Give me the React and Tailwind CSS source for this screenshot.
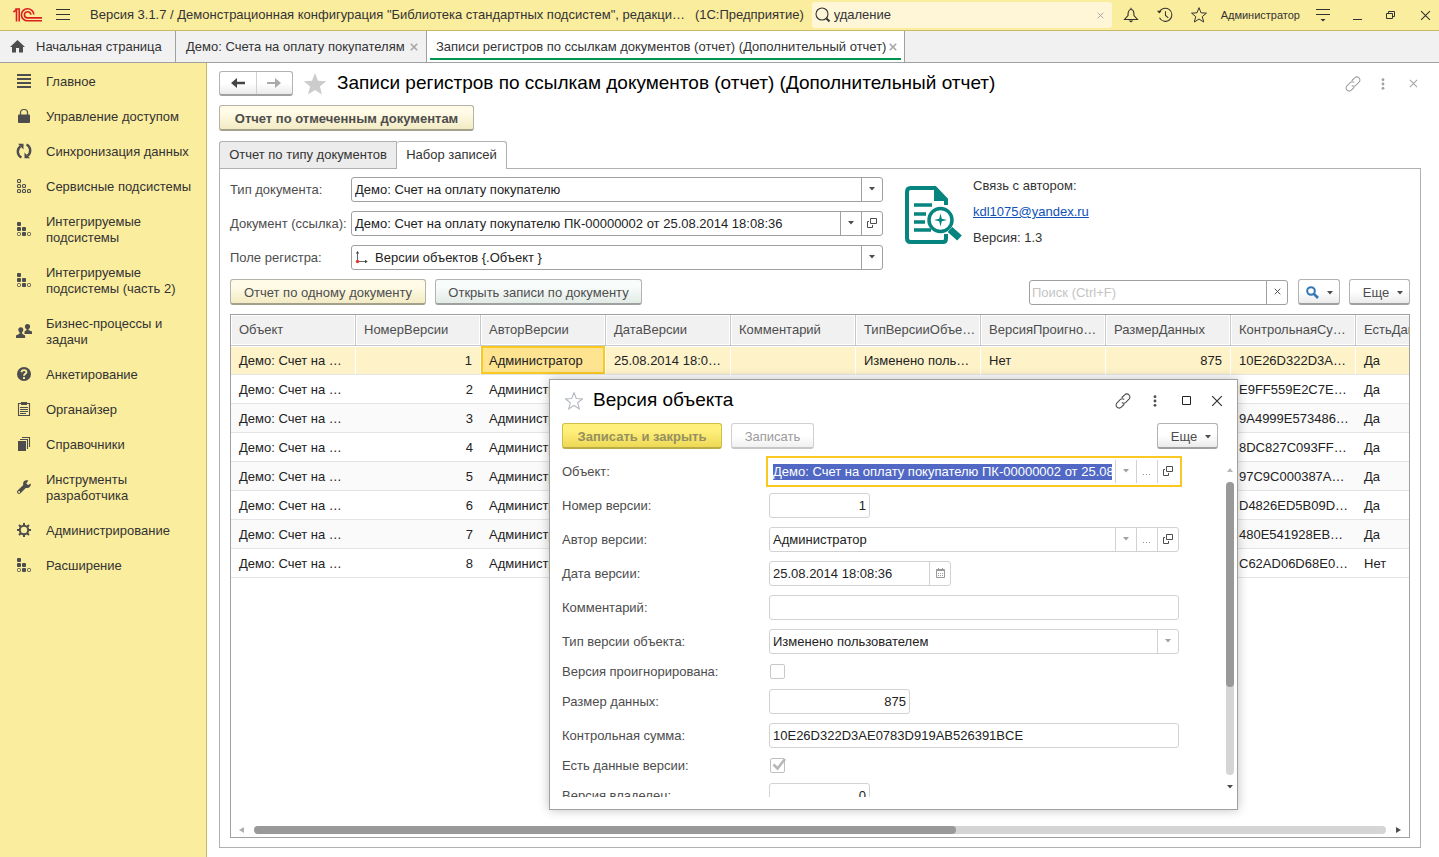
import clsx from "clsx";

const sections = [
  { label: "Главное", icon: "lines" },
  { label: "Управление доступом", icon: "lock" },
  { label: "Синхронизация данных", icon: "sync" },
  { label: "Сервисные подсистемы", icon: "dots" },
  { label: "Интегрируемые подсистемы", icon: "blocks" },
  { label: "Интегрируемые подсистемы (часть 2)", icon: "blocks" },
  { label: "Бизнес-процессы и задачи", icon: "people" },
  { label: "Анкетирование", icon: "question" },
  { label: "Органайзер", icon: "clipboard" },
  { label: "Справочники", icon: "books" },
  { label: "Инструменты разработчика", icon: "wrench" },
  { label: "Администрирование", icon: "gear" },
  { label: "Расширение", icon: "blocks" },
];

const columns = [
  "Объект",
  "НомерВерсии",
  "АвторВерсии",
  "ДатаВерсии",
  "Комментарий",
  "ТипВерсииОбъе…",
  "ВерсияПроигно…",
  "РазмерДанных",
  "КонтрольнаяСу…",
  "ЕстьДанные",
];

const hashes = [
  "10E26D322D3A…",
  "E9FF559E2C7E…",
  "9A4999E573486…",
  "8DC827C093FF…",
  "97C9C000387A…",
  "D4826ED5B09D…",
  "480E541928EB…",
  "C62AD06D68E0…",
];

const rows = hashes.map((hash, i) => ({
  object: "Демо: Счет на …",
  number: i + 1,
  author: "Администратор",
  date: i === 0 ? "25.08.2014 18:0…" : "",
  comment: "",
  type: i === 0 ? "Изменено поль…" : "",
  ignored: i === 0 ? "Нет" : "",
  size: i === 0 ? "875" : "",
  hash,
  hasData: i === 7 ? "Нет" : "Да",
}));

function Logo() {
  return (
    <svg width="30" height="16" viewBox="0 0 30 16" fill="none" stroke="#d9201f" strokeWidth="1.6">
      <path d="M.4 5 3.500 2.800V14.500M2.200 2H6.200V14.500" />
      <path d="M20.800 7.500A6.200 6 0 1 0 14.600 13.800H29" />
      <path d="M17.800 7.800A3.200 3.100 0 1 0 14.600 10.900H29" />
    </svg>
  );
}

function SectionIcon({ name }) {
  const box = { width: 16, height: 16, viewBox: "0 0 16 16", fill: "#4d4d4d", className: "-mt-0.5 shrink-0" };
  switch (name) {
    case "lines":
      return (
        <svg {...box}>
          <path d="M1 1h14v2H1zM1 5h14v2H1zM1 9h14v2H1zM1 13h14v2H1z" />
        </svg>
      );
    case "lock":
      return (
        <svg {...box}>
          <rect x="2" y="6.500" width="12" height="8.500" rx="1" />
          <path d="M4.500 7V4.500a3 3 0 0 1 3-3h1a3 3 0 0 1 3 3V7" fill="none" stroke="#4d4d4d" strokeWidth="1.2" />
        </svg>
      );
    case "sync":
      return (
        <svg {...box}>
          <path d="M5.500 14.500C1 12.500.5 6 4.500 3.200M10.500 1.500C15 3.500 15.500 10 11.500 12.800" fill="none" stroke="#4d4d4d" strokeWidth="2.4" />
          <path d="M2 .8h5.500v5.700zM14 15.200H8.500V9.500z" />
        </svg>
      );
    case "dots":
      return (
        <svg {...box} fill="none" stroke="#4d4d4d" strokeWidth="1.1">
          {[[1.5, 1.5], [1.5, 6.5], [6.5, 6.5], [1.5, 11.5], [6.5, 11.5], [11.5, 11.5]].map(([x, y]) => (
            <rect key={`${x}-${y}`} x={x} y={y} width="3" height="3" rx="1" />
          ))}
        </svg>
      );
    case "blocks":
      return (
        <svg {...box}>
          <rect x="1" y="1" width="4" height="4" rx="1" />
          <rect x="1" y="6" width="4" height="4" rx="1" />
          <rect x="6" y="6" width="4" height="4" rx="1" />
          <rect x="6" y="11" width="4" height="4" rx="1" />
          <rect x="1.500" y="11.500" width="3" height="3" rx="1" fill="none" stroke="#4d4d4d" />
          <rect x="11.500" y="11.500" width="3" height="3" rx="1" fill="none" stroke="#4d4d4d" />
        </svg>
      );
    case "people":
      return (
        <svg {...box}>
          <circle cx="11.500" cy="3.500" r="2.600" />
          <path d="M8.500 11V8.500L10.500 7V5h2v2l3.500 1.500V11z" />
          <circle cx="4.800" cy="6.800" r="2.500" />
          <path d="M0 15v-2.500l3.500-1.700V8h2.600v2.800l3 1.700V15z" />
        </svg>
      );
    case "question":
      return (
        <svg {...box}>
          <circle cx="8" cy="8" r="7" />
          <path d="M5.500 6.300C5.600 3.300 10.500 3.400 10.400 6.200 10.300 7.900 8 7.800 8 9.800M8 11v2" fill="none" stroke="#fbed9e" strokeWidth="1.900" />
        </svg>
      );
    case "clipboard":
      return (
        <svg {...box}>
          <path d="M2.500 2.500h11v12h-11z" fill="none" stroke="#4d4d4d" strokeWidth="1.1" />
          <path d="M5 1h6v3H5zM4 6h8v1H4zM4 8h8v1H4zM4 10h8v1H4zM4 12h6v1H4z" />
        </svg>
      );
    case "books":
      return (
        <svg {...box}>
          <path d="M2 5h8v10H2z" />
          <path d="M4 3.500h7.500V13M6 1.500h7.500V11" fill="none" stroke="#4d4d4d" strokeWidth="1.100" />
        </svg>
      );
    case "wrench":
      return (
        <svg {...box}>
          <path d="M14.800 4.500 12 6 10.300 4.400 12.300 1.500C8.500.5 6.500 3 7.300 6L1.600 11.400a2 2 0 0 0 0 2.900c.9.900 2 .8 2.900 0L9.800 8.900c3 .8 5.400-1.400 5-4.400zM3.100 14a1 1 0 1 1 0-2 1 1 0 0 1 0 2z" />
        </svg>
      );
    default:
      return (
        <svg {...box} fill="none" stroke="#4d4d4d">
          <circle cx="8" cy="8" r="4.200" strokeWidth="2" />
          <path
            d="M8 1v2.500M8 12.500V15M1 8h2.500M12.500 8H15M3 3l1.800 1.800M11.200 11.200 13 13M13 3l-1.800 1.800M4.800 11.200 3 13"
            strokeWidth="2"
          />
        </svg>
      );
  }
}

function Cross({ size = 8, className = "text-[#a6a6a6]", weight = 1.6 }) {
  return (
    <svg width={size} height={size} viewBox="0 0 10 10" stroke="currentColor" strokeWidth={weight} className={className}>
      <path d="M1 1l8 8M9 1 1 9" />
    </svg>
  );
}

function Caret({ className = "text-[#4d4d4d]" }) {
  return (
    <svg width="6" height="4" viewBox="0 0 6 4" fill="currentColor" className={className}>
      <path d="M0 0h6L3 3.500z" />
    </svg>
  );
}

function OpenIcon() {
  return (
    <svg width="10" height="10" viewBox="0 0 10 10" fill="none" stroke="#4d4d4d" strokeWidth="1">
      <path d="M3.500.5h6v5h-6zM2 3.500H.5v6h5V7" />
    </svg>
  );
}

function LinkIcon() {
  return (
    <svg width="16" height="16" viewBox="0 0 16 16" fill="none" stroke="currentColor" strokeWidth="1.100" strokeLinecap="round">
      <path d="M7 4.500 9.700 1.800a3 3 0 0 1 4.300 0 3 3 0 0 1 0 4.300L10.800 9.300a3 3 0 0 1-3.600.5" />
      <path d="M9 11.500 6.300 14.200a3 3 0 0 1-4.300 0 3 3 0 0 1 0-4.300L5.200 6.700a3 3 0 0 1 3.600-.5" />
    </svg>
  );
}

function DotsIcon() {
  return (
    <svg width="4" height="12" viewBox="0 0 4 12" fill="currentColor">
      <circle cx="2" cy="1.700" r="1.400" />
      <circle cx="2" cy="6" r="1.400" />
      <circle cx="2" cy="10.300" r="1.400" />
    </svg>
  );
}

function StarIcon({ size, ...props }) {
  return (
    <svg width={size} height={size} viewBox="0 0 24 24" {...props}>
      <path d="M12 1l3 7.700 8.200.5-6.300 5.200 2.100 8.100L12 18l-7 4.500 2.100-8.100L.8 9.200 9 8.700z" />
    </svg>
  );
}

const IconButton = ({ label, className, children }) => (
  <button aria-label={label} className={clsx("flex items-center justify-center", className)}>
    {children}
  </button>
);

function Button({ tone = "plain", className, children }) {
  return (
    <button
      className={clsx(
        "flex h-[26px] items-center justify-center rounded-[3px] border border-b-2 pt-0.5 whitespace-nowrap",
        tone === "plain" && "border-[#b3b3b3] border-b-[#a0a0a0] bg-linear-to-b from-white from-50% to-[#ebebeb] text-[#4d4d4d]",
        tone === "cream" && "border-[#b3b3a8] border-b-[#a3a08c] bg-linear-to-b from-[#fffbe6] from-30% to-[#f3ebc4] text-[#4d4d4d]",
        tone === "mint" && "border-[#b3b3b3] border-b-[#a0a0a0] bg-linear-to-b from-[#f8fcfa] from-30% to-[#e2ebe6] text-[#4d4d4d]",
        tone === "yellow" && "border-[#d0bf45] border-b-[#bcac45] bg-linear-to-b from-[#ffef7b] from-30% to-[#eed955] font-bold text-[#96905f]",
        tone === "disabled" && "border-[#d0d0d0] border-b-[#c6c6c6] bg-linear-to-b from-white from-50% to-[#f0f0f0] text-[#9a9a9a]",
        className
      )}
    >
      {children}
    </button>
  );
}

function TitleBar() {
  return (
    <header className="flex h-[31px] shrink-0 items-center border-b border-[#c9b866] bg-[#fbed9e] text-[#333]">
      <span className="ml-[13px] w-[30px]">
        <Logo />
      </span>
      <IconButton label="Меню" className="ml-[13px]">
        <svg width="14" height="12" viewBox="0 0 14 12" stroke="#333">
          <path d="M0 .5h14M0 5.500h14M0 10.500h14" />
        </svg>
      </IconButton>
      <span className="ml-5 min-w-0 truncate">
        Версия 3.1.7 / Демонстрационная конфигурация "Библиотека стандартных подсистем", редакци…
      </span>
      <span className="ml-2.5 whitespace-nowrap">(1С:Предприятие)</span>
      <div className="ml-auto flex h-[26px] w-[300px] shrink-0 items-center rounded-[3px] bg-[#fef6d6] pr-2 pl-[3px]">
        <svg width="16" height="16" viewBox="0 0 16 16" fill="none" stroke="#333" className="shrink-0">
          <circle cx="7" cy="7" r="6" strokeWidth="1.100" />
          <path d="m11.500 11.500 3 3" strokeWidth="2" />
        </svg>
        <input aria-label="Поиск" defaultValue="удаление" className="ml-[3px] min-w-0 flex-1 outline-none" />
        <IconButton label="Очистить">
          <Cross size={7} weight={1.4} />
        </IconButton>
      </div>
      <IconButton label="Уведомления" className="ml-[11px] w-4">
        <svg width="16" height="16" viewBox="0 0 16 16" fill="none" stroke="#333" strokeWidth="1.100">
          <path d="M1.500 12.500h13L11 8.500C11 5 10.500 2.500 8 2.500S5 5 5 8.500zM8 .8v1.700" />
          <path d="M5.500 13.500h5L8 15.500z" fill="#333" stroke="none" />
        </svg>
      </IconButton>
      <IconButton label="История" className="ml-[18px] w-4">
        <svg width="17" height="16" viewBox="0 0 17 16" fill="none" stroke="#333" strokeWidth="1.100">
          <path d="M2.300 5.200A7 7 0 1 1 2.600 11M9 4v4.500l3 2.500" />
          <path d="M0 3.500h5L2.500 6.500z" fill="#333" stroke="none" />
        </svg>
      </IconButton>
      <IconButton label="Избранное" className="ml-[18px] w-4">
        <StarIcon size={16} fill="none" stroke="#333" strokeWidth="1.500" />
      </IconButton>
      <button className="ml-3.5 text-[11px]">Администратор</button>
      <IconButton label="Сервис" className="ml-[15px] w-4">
        <svg width="14" height="13" viewBox="0 0 14 13" fill="#333">
          <path d="M0 0h14v1H0zM0 5h14v1H0zM4.500 10h5L7 12.500z" />
        </svg>
      </IconButton>
      <IconButton label="Свернуть" className="ml-[18px] h-4 w-4">
        <svg width="9" height="9" viewBox="0 0 9 9" fill="#333">
          <path d="M0 8h9v1H0z" />
        </svg>
      </IconButton>
      <IconButton label="Восстановить" className="ml-[18px] w-4">
        <svg width="10" height="10" viewBox="0 0 10 10" fill="none" stroke="#333">
          <path d="M.5 3.500h6v5h-6zM2.500 3.500v-2h6v5h-2" />
        </svg>
      </IconButton>
      <IconButton label="Закрыть" className="mr-1.5 ml-[18px] w-4">
        <Cross size={11} weight={1} className="text-[#333]" />
      </IconButton>
    </header>
  );
}

function WindowTabs() {
  return (
    <nav className="flex h-8 shrink-0 border-b border-[#a0a0a0] bg-[#f1f1f1] text-[#333]">
      <button className="flex w-44 items-center border-r border-[#a0a0a0] pl-2.5 text-left whitespace-nowrap">
        <svg width="15" height="14" viewBox="0 0 15 14" fill="#4d4d4d" className="mr-[11px]">
          <path d="M7.500 0 15 7h-2v5.500H9V8H6v4.500H2V7H0z" />
        </svg>
        Начальная страница
      </button>
      <div className="flex w-[251px] items-center justify-between border-r border-[#a0a0a0] pr-2 pl-2.5">
        <button className="whitespace-nowrap">Демо: Счета на оплату покупателям</button>
        <IconButton label="Закрыть вкладку">
          <Cross weight={2} />
        </IconButton>
      </div>
      <div className="flex w-[478px] border-r border-[#a0a0a0] bg-white px-[3px]">
        <div className="mb-0.5 flex w-full items-center justify-between border-b-2 border-[#00964b] pt-1 pr-1 pl-1.5">
          <button className="whitespace-nowrap">Записи регистров по ссылкам документов (отчет) (Дополнительный отчет)</button>
          <IconButton label="Закрыть вкладку">
            <Cross weight={2} />
          </IconButton>
        </div>
      </div>
    </nav>
  );
}

function Sidebar() {
  return (
    <aside className="w-[207px] shrink-0 border-r border-[#c9b866] bg-[#fbed9e] pt-px text-[#333]">
      {sections.map((s) => (
        <button key={s.label} className="flex w-full items-center gap-3.5 pt-2.5 pr-3 pb-[9px] pl-4 text-left leading-4">
          <SectionIcon name={s.icon} />
          {s.label}
        </button>
      ))}
    </aside>
  );
}

// Bordered box shared by all fields; trailing buttons are passed as children
function FieldBox({ dark, focused, className, children }) {
  return (
    <div
      className={clsx(
        "flex h-[25px] border bg-white text-[#222]",
        focused ? "border-transparent outline-2 outline-offset-1 outline-[#f9c922]" : "rounded-[3px]",
        !focused && (dark ? "border-[#a0a0a0]" : "border-[#d2d2d2]"),
        className
      )}
    >
      {children}
    </div>
  );
}

function FieldButton({ label, dark, children }) {
  return (
    <button
      aria-label={label}
      className={clsx(
        "flex w-[21px] shrink-0 items-center justify-center border-l pb-0.5",
        dark ? "border-[#a0a0a0]" : "border-[#d2d2d2]"
      )}
    >
      {children}
    </button>
  );
}

function EllipsisIcon() {
  return (
    <svg width="8" height="10" viewBox="0 0 8 10" fill="#999">
      <path d="M0 8h1v1H0zM3 8h1v1H3zM6 8h1v1H6z" />
    </svg>
  );
}

function SelectBox({ id, value, dark, icon }) {
  return (
    <FieldBox dark={dark} className="relative">
      {icon}
      <select id={id} className="min-w-0 flex-1 appearance-none pr-6 pl-[3px] outline-none">
        <option>{value}</option>
      </select>
      <span
        className={clsx(
          "pointer-events-none absolute inset-y-0 right-0 flex w-[21px] items-center justify-center border-l pb-0.5",
          dark ? "border-[#a0a0a0]" : "border-[#d2d2d2]"
        )}
      >
        <Caret className={dark ? "text-[#4d4d4d]" : "text-[#a0a0a0]"} />
      </span>
    </FieldBox>
  );
}

function ReportForm() {
  return (
    <div className="flex">
      <div className="grid grid-cols-[121px_532px] items-center gap-y-[9px] text-[#4d4d4d]">
        <label htmlFor="docType">Тип документа:</label>
        <SelectBox id="docType" dark value="Демо: Счет на оплату покупателю" />
        <label htmlFor="docRef" className="whitespace-nowrap">Документ (ссылка):</label>
        <FieldBox dark>
          <input
            id="docRef"
            defaultValue="Демо: Счет на оплату покупателю ПК-00000002 от 25.08.2014 18:08:36"
            className="min-w-0 flex-1 pl-[3px] outline-none"
          />
          <FieldButton label="Выбрать" dark>
            <Caret />
          </FieldButton>
          <FieldButton label="Открыть" dark>
            <OpenIcon />
          </FieldButton>
        </FieldBox>
        <label htmlFor="registerField">Поле регистра:</label>
        <SelectBox
          id="registerField"
          dark
          value="Версии объектов {.Объект }"
          icon={
            <svg width="14" height="14" viewBox="0 0 14 14" className="mt-1 mr-[3px] ml-[3px] shrink-0">
              <path d="M2.500 11V3M2.500 11.500H11" stroke="#666" fill="none" />
              <path d="M.8 3.500h3.400L2.500 1zM10 9.800v3.400l2.800-1.700z" fill="#444" />
              <circle cx="2.500" cy="11.500" r="1.700" fill="#e8382c" />
            </svg>
          }
        />
      </div>
      <svg width="60" height="60" viewBox="0 0 60 60" fill="none" stroke="#06847f" strokeWidth="4" className="mt-2 ml-5 shrink-0">
        <path d="M43 49v4.500Q43 57 40 57H7.500Q4 57 4 53V7Q4 3 7.500 3H32L43 14.500V20" />
        <path d="M32 3v12h11z" fill="#06847f" strokeWidth="2" />
        <path d="M11 20h18M11 29h12M11 37h11M11 45h17" strokeWidth="3.500" />
        <circle cx="37.500" cy="35" r="11.500" fill="#fff" strokeWidth="3.500" />
        <path d="m47 44.500 9.500 8.500" strokeWidth="7" />
        <path d="M37.500 28.500l1.300 5.200 5.200 1.300-5.200 1.300-1.300 5.200-1.300-5.200L31 35l5.200-1.300z" fill="#06847f" stroke="none" />
      </svg>
      <div className="ml-2.5 flex flex-col items-start gap-2.5 pt-px text-[#333]">
        <span className="leading-4">Связь с автором:</span>
        <a href="mailto:kdl1075@yandex.ru" className="leading-4 text-[#0f52b8] underline">
          kdl1075@yandex.ru
        </a>
        <span className="leading-4">Версия: 1.3</span>
      </div>
    </div>
  );
}

function RecordsTable() {
  return (
    <div className="mt-[9px] flex min-h-0 flex-1 flex-col overflow-hidden border border-[#a0a0a0]">
      <div className="min-h-0 flex-1 overflow-hidden">
        <table className="w-[1250px] table-fixed border-separate border-spacing-0">
          <thead>
            <tr className="h-[31px]">
              {columns.map((c) => (
                <th
                  key={c}
                  className="overflow-hidden border-r border-b border-[#c8c8c8] bg-[#f1f1f1] px-2 text-left font-normal whitespace-nowrap text-[#4d4d4d] shadow-[inset_0_0_0_1px_#fff]"
                >
                  {c}
                </th>
              ))}
            </tr>
          </thead>
          <tbody>
            {rows.map((row, r) => (
              <tr key={row.number} className={clsx("h-[29px]", r === 0 ? "bg-[#fdf2c8]" : r % 2 === 0 && "bg-[#fafafa]")}>
                {Object.entries(row).map(([key, value]) => (
                  <td
                    key={key}
                    className={clsx(
                      "overflow-hidden border-b border-b-[#e4e4e4] px-2 pt-0.5 whitespace-nowrap text-[#222]",
                      r === 0 && "border-r border-r-white",
                      (key === "number" || key === "size") && "text-right",
                      r === 0 && key === "author"
                        ? "bg-[#fee391] shadow-[inset_0_0_0_2px_#f9c922]"
                        : r === 0 && "shadow-[inset_0_1px_0_#fff]"
                    )}
                  >
                    {value}
                  </td>
                ))}
              </tr>
            ))}
          </tbody>
        </table>
      </div>
      <div className="flex h-4 shrink-0 items-center gap-2.5 px-2 pt-0.5">
        <svg width="5" height="6" viewBox="0 0 5 6" fill="#b0b0b0">
          <path d="M5 0v6L0 3z" />
        </svg>
        <div className="h-2 flex-1 rounded-full bg-[#d5d5d5]">
          <div className="h-2 w-[62%] rounded-full bg-[#999]" />
        </div>
        <svg width="5" height="6" viewBox="0 0 5 6" fill="#4d4d4d">
          <path d="M0 0v6l5-3z" />
        </svg>
      </div>
    </div>
  );
}

function VersionDialog() {
  return (
    <section
      role="dialog"
      aria-label="Версия объекта"
      className="absolute top-[379px] left-[549px] flex h-[431px] w-[689px] flex-col border border-[#a0a0a0] bg-white pb-3 shadow-[0_0_10px_rgba(0,0,0,0.25)]"
    >
      <div className="flex h-[43px] shrink-0 items-center pr-3 pb-0.5 pl-[15px] text-[#4d4d4d]">
        <IconButton label="В избранное">
          <StarIcon size={18} fill="none" stroke="#b4bac0" strokeWidth="1.500" />
        </IconButton>
        <h2 className="ml-2.5 text-[19px] text-black">Версия объекта</h2>
        <IconButton label="Ссылка" className="ml-auto w-4">
          <LinkIcon />
        </IconButton>
        <IconButton label="Действия" className="ml-4 w-4">
          <DotsIcon />
        </IconButton>
        <IconButton label="Развернуть" className="ml-[15px] w-4">
          <svg width="9" height="9" viewBox="0 0 9 9" fill="none" stroke="#222">
            <path d="M.5.5h8v8h-8z" />
          </svg>
        </IconButton>
        <IconButton label="Закрыть" className="ml-[15px] w-4">
          <Cross size={12} weight={1} className="text-[#333]" />
        </IconButton>
      </div>
      <div className="flex shrink-0 gap-[9px] pr-[19px] pl-3">
        <Button tone="yellow" className="w-40">Записать и закрыть</Button>
        <Button tone="disabled" className="w-[83px]">Записать</Button>
        <Button className="ml-auto w-[61px] gap-2 pl-[7px]">
          Еще <Caret />
        </Button>
      </div>
      <div className="flex min-h-0 flex-1 overflow-hidden">
        <div className="grid flex-1 grid-cols-[207px_410px] content-start items-center gap-y-[9px] overflow-hidden pt-[10px] pl-3 text-[#4d4d4d]">
          <label htmlFor="object">Объект:</label>
          <FieldBox focused>
            <input
              id="object"
              defaultValue="Демо: Счет на оплату покупателю ПК-00000002 от 25.08.2014 18:08:36"
              className="mx-[3px] h-4 min-w-0 flex-1 self-center bg-[#5169c4] text-white outline-none"
            />
            <FieldButton label="Выбрать из списка">
              <Caret className="text-[#a0a0a0]" />
            </FieldButton>
            <FieldButton label="Выбрать">
              <EllipsisIcon />
            </FieldButton>
            <FieldButton label="Открыть">
              <OpenIcon />
            </FieldButton>
          </FieldBox>

          <label htmlFor="number">Номер версии:</label>
          <FieldBox className="w-[101px]">
            <input id="number" defaultValue="1" className="w-full pr-[3px] text-right outline-none" />
          </FieldBox>

          <label htmlFor="author">Автор версии:</label>
          <FieldBox>
            <input id="author" defaultValue="Администратор" className="min-w-0 flex-1 pl-[3px] outline-none" />
            <FieldButton label="Выбрать из списка">
              <Caret className="text-[#a0a0a0]" />
            </FieldButton>
            <FieldButton label="Выбрать">
              <EllipsisIcon />
            </FieldButton>
            <FieldButton label="Открыть">
              <OpenIcon />
            </FieldButton>
          </FieldBox>

          <label htmlFor="date">Дата версии:</label>
          <FieldBox className="w-[182px]">
            <input id="date" defaultValue="25.08.2014 18:08:36" className="min-w-0 flex-1 pl-[3px] outline-none" />
            <FieldButton label="Календарь">
              <svg width="9" height="10" viewBox="0 0 9 10" fill="none" stroke="#999">
                <path d="M.5 1.500h8v8h-8zM.5 2.500h8M2.500 0v2M6.500 0v2" />
                <path d="M2 5.500h5M2 7.500h5" strokeDasharray="1 1" />
              </svg>
            </FieldButton>
          </FieldBox>

          <label htmlFor="comment">Комментарий:</label>
          <FieldBox>
            <input id="comment" className="w-full pl-[3px] outline-none" />
          </FieldBox>

          <label htmlFor="versionType">Тип версии объекта:</label>
          <SelectBox id="versionType" value="Изменено пользователем" />

          <label htmlFor="ignored" className="leading-[17px]">Версия проигнорирована:</label>
          <input
            id="ignored"
            type="checkbox"
            className="ml-px h-[15px] w-[15px] appearance-none rounded-xs border border-[#c8c8c8]"
          />

          <label htmlFor="size">Размер данных:</label>
          <FieldBox className="w-[141px]">
            <input id="size" defaultValue="875" className="w-full pr-[3px] text-right outline-none" />
          </FieldBox>

          <label htmlFor="hash">Контрольная сумма:</label>
          <FieldBox>
            <input id="hash" defaultValue="10E26D322D3AE0783D919AB526391BCE" className="w-full pl-[3px] outline-none" />
          </FieldBox>

          <label htmlFor="hasData" className="leading-[17px]">Есть данные версии:</label>
          <span className="relative ml-px flex">
            <input
              id="hasData"
              type="checkbox"
              defaultChecked
              className="h-[15px] w-[15px] appearance-none rounded-xs border border-[#c0c0c0]"
            />
            <svg
              width="14"
              height="14"
              viewBox="0 0 14 14"
              fill="none"
              stroke="#b8b8b8"
              strokeWidth="2.600"
              className="pointer-events-none absolute top-0 left-0.5"
            >
              <path d="M1.500 6.500 5.500 10.500 13 1" />
            </svg>
          </span>

          <label htmlFor="owner">Версия владелец:</label>
          <FieldBox className="w-[101px]">
            <input id="owner" defaultValue="0" className="w-full pr-[3px] text-right outline-none" />
          </FieldBox>
        </div>
        <div className="mr-[3px] mb-2 flex w-2 flex-col items-center gap-2.5 pt-[19px]">
          <svg width="6" height="4" viewBox="0 0 6 4" fill="#b8b8b8" className="shrink-0">
            <path d="M0 4h6L3 0z" />
          </svg>
          <div className="w-2 flex-1 rounded-full bg-[#d5d5d5]">
            <div className="h-[70%] rounded-full bg-[#999]" />
          </div>
          <Caret />
        </div>
      </div>
    </section>
  );
}

export default function App() {
  return (
    <div className="relative flex h-screen flex-col overflow-hidden bg-white font-['Liberation_Sans',Arial,sans-serif] text-[13px]">
      <TitleBar />
      <WindowTabs />
      <div className="flex min-h-0 flex-1">
        <Sidebar />
        <main className="flex min-w-0 flex-1 flex-col pt-2 pr-[18px] pb-[9px] pl-3">
          <div className="flex h-[25px] shrink-0 items-center">
            <div className="flex h-[25px] w-[74px] rounded-[3px] border border-b-2 border-[#b3b3b3] border-b-[#a0a0a0] bg-linear-to-b from-white from-50% to-[#ebebeb]">
              <IconButton label="Назад" className="flex-1 border-r border-[#d0d0d0]">
                <svg width="14" height="10" viewBox="0 0 14 10" fill="#444">
                  <path d="M0 5l6-5v3.700h8v2.600H6V10z" />
                </svg>
              </IconButton>
              <IconButton label="Вперед" className="flex-1">
                <svg width="14" height="10" viewBox="0 0 14 10" fill="#aaa">
                  <path d="M14 5 8 0v4H0v2h8v4z" />
                </svg>
              </IconButton>
            </div>
            <IconButton label="В избранное" className="ml-2.5">
              <StarIcon size={24} fill="#ccc" />
            </IconButton>
            <h1 className="ml-2.5 text-[19px] whitespace-nowrap text-black">
              Записи регистров по ссылкам документов (отчет) (Дополнительный отчет)
            </h1>
            <div className="ml-auto flex items-center gap-3.5 text-[#a0a0a0]">
              <IconButton label="Ссылка" className="w-4">
                <LinkIcon />
              </IconButton>
              <IconButton label="Действия" className="w-4">
                <DotsIcon />
              </IconButton>
              <IconButton label="Закрыть" className="w-4">
                <Cross size={9} weight={1.2} />
              </IconButton>
            </div>
          </div>
          <Button tone="cream" className="mt-[9px] w-[255px] shrink-0 font-bold">
            Отчет по отмеченным документам
          </Button>
          <div className="mt-2.5 flex shrink-0 text-[#333]">
            <button className="h-[27px] w-[178px] rounded-tl-[3px] border border-b-0 border-[#b0b0b0] bg-[#ececec]">
              Отчет по типу документов
            </button>
            <button className="relative -mb-px h-7 w-[110px] rounded-t-[3px] border border-b-0 border-l-0 border-[#b0b0b0] bg-white pb-0.5">
              Набор записей
            </button>
          </div>
          <div className="flex min-h-0 flex-1 flex-col border border-[#b0b0b0] px-2.5 pt-2 pb-[9px]">
            <ReportForm />
            <div className="mt-[9px] flex shrink-0 items-end">
              <Button tone="cream" className="w-[196px]">Отчет по одному документу</Button>
              <Button tone="mint" className="ml-[9px] w-[207px]">Открыть записи по документу</Button>
              <FieldBox dark className="ml-auto w-[259px]">
                <input
                  aria-label="Поиск по таблице"
                  placeholder="Поиск (Ctrl+F)"
                  className="min-w-0 flex-1 pl-0.5 outline-none placeholder:text-[#c4c4c4]"
                />
                <FieldButton label="Очистить" dark>
                  <Cross size={7} weight={1.4} className="text-[#4d4d4d]" />
                </FieldButton>
              </FieldBox>
              <Button className="ml-2.5 w-[42px] gap-2">
                <svg width="13" height="13" viewBox="0 0 13 13" fill="none" stroke="#2f78b5">
                  <circle cx="5" cy="5" r="3.800" strokeWidth="2" />
                  <path d="m8 8 4 4" strokeWidth="2.500" />
                </svg>
                <Caret />
              </Button>
              <Button className="ml-[9px] w-[61px] gap-2 pl-[7px]">
                Еще <Caret />
              </Button>
            </div>
            <RecordsTable />
          </div>
        </main>
      </div>
      <VersionDialog />
    </div>
  );
}
